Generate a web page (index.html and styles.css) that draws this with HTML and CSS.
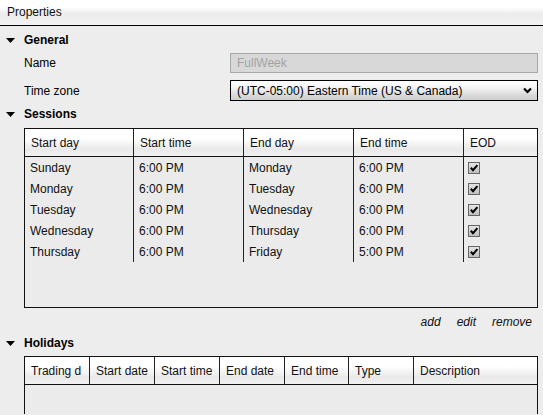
FILE: index.html
```html
<!DOCTYPE html>
<html>
<head>
<meta charset="utf-8">
<link rel="stylesheet" href="styles.css">
</head>
<body>
<svg width="0" height="0" class="defs">
  <defs>
    <linearGradient id="cbg" x1="0" y1="0" x2="0" y2="1">
      <stop offset="0" stop-color="#e8e8e8"/>
      <stop offset="1" stop-color="#bcbcbc"/>
    </linearGradient>
  </defs>
</svg>
<div class="titlebar">Properties</div>
<div class="main">
  <div class="section-head head-general">
    <svg class="tri" width="9" height="5" viewBox="0 0 9 5"><polygon points="0,0 9,0 4.5,5" fill="#000"/></svg>
    <span>General</span>
  </div>
  <div class="field-row row-name">
    <div class="label">Name</div>
    <div class="textbox">FullWeek</div>
  </div>
  <div class="field-row row-tz">
    <div class="label">Time zone</div>
    <div class="select">
      <span>(UTC-05:00) Eastern Time (US &amp; Canada)</span>
      <svg class="chev" width="9" height="7" viewBox="0 0 9 7"><polyline points="1,1.5 4.5,5 8,1.5" fill="none" stroke="#000" stroke-width="2.2"/></svg>
    </div>
  </div>
  <div class="section-head head-sessions">
    <svg class="tri" width="9" height="5" viewBox="0 0 9 5"><polygon points="0,0 9,0 4.5,5" fill="#000"/></svg>
    <span>Sessions</span>
  </div>
  <div class="grid-box sessions">
    <div class="grow ghead">
      <div class="cell">Start day</div>
      <div class="cell">Start time</div>
      <div class="cell">End day</div>
      <div class="cell">End time</div>
      <div class="cell last">EOD</div>
    </div>
    <div class="grow">
      <div class="cell">Sunday</div><div class="cell">6:00 PM</div><div class="cell">Monday</div><div class="cell">6:00 PM</div>
      <div class="cell last"><svg class="chk" width="12" height="12" viewBox="0 0 12 12"><rect x="0.5" y="0.5" width="11" height="11" fill="url(#cbg)" stroke="#666"/><polyline points="2.8,5.8 5,8.2 9.4,3.2" fill="none" stroke="#000" stroke-width="2"/></svg></div>
    </div>
    <div class="grow">
      <div class="cell">Monday</div><div class="cell">6:00 PM</div><div class="cell">Tuesday</div><div class="cell">6:00 PM</div>
      <div class="cell last"><svg class="chk" width="12" height="12" viewBox="0 0 12 12"><rect x="0.5" y="0.5" width="11" height="11" fill="url(#cbg)" stroke="#666"/><polyline points="2.8,5.8 5,8.2 9.4,3.2" fill="none" stroke="#000" stroke-width="2"/></svg></div>
    </div>
    <div class="grow">
      <div class="cell">Tuesday</div><div class="cell">6:00 PM</div><div class="cell">Wednesday</div><div class="cell">6:00 PM</div>
      <div class="cell last"><svg class="chk" width="12" height="12" viewBox="0 0 12 12"><rect x="0.5" y="0.5" width="11" height="11" fill="url(#cbg)" stroke="#666"/><polyline points="2.8,5.8 5,8.2 9.4,3.2" fill="none" stroke="#000" stroke-width="2"/></svg></div>
    </div>
    <div class="grow">
      <div class="cell">Wednesday</div><div class="cell">6:00 PM</div><div class="cell">Thursday</div><div class="cell">6:00 PM</div>
      <div class="cell last"><svg class="chk" width="12" height="12" viewBox="0 0 12 12"><rect x="0.5" y="0.5" width="11" height="11" fill="url(#cbg)" stroke="#666"/><polyline points="2.8,5.8 5,8.2 9.4,3.2" fill="none" stroke="#000" stroke-width="2"/></svg></div>
    </div>
    <div class="grow">
      <div class="cell">Thursday</div><div class="cell">6:00 PM</div><div class="cell">Friday</div><div class="cell">5:00 PM</div>
      <div class="cell last"><svg class="chk" width="12" height="12" viewBox="0 0 12 12"><rect x="0.5" y="0.5" width="11" height="11" fill="url(#cbg)" stroke="#666"/><polyline points="2.8,5.8 5,8.2 9.4,3.2" fill="none" stroke="#000" stroke-width="2"/></svg></div>
    </div>
  </div>
  <div class="actions">
    <span>add</span><span>edit</span><span>remove</span>
  </div>
  <div class="section-head head-holidays">
    <svg class="tri" width="9" height="5" viewBox="0 0 9 5"><polygon points="0,0 9,0 4.5,5" fill="#000"/></svg>
    <span>Holidays</span>
  </div>
  <div class="grid-box holidays">
    <div class="grow ghead">
      <div class="cell">Trading d</div>
      <div class="cell">Start date</div>
      <div class="cell">Start time</div>
      <div class="cell">End date</div>
      <div class="cell">End time</div>
      <div class="cell">Type</div>
      <div class="cell last">Description</div>
    </div>
  </div>
</div>
</body>
</html>
```

FILE: styles.css
```css
html, body {
  margin: 0;
  padding: 0;
}
body {
  width: 543px;
  height: 415px;
  overflow: hidden;
  background: #ededed;
  font-family: "Liberation Sans", Arial, sans-serif;
  font-size: 12px;
  color: #000;
}
.defs {
  display: block;
  width: 0;
  height: 0;
}
.titlebar {
  height: 25px;
  line-height: 24px;
  padding-left: 7px;
  border-bottom: 1px solid #000;
  background: linear-gradient(#ffffff 0%, #ffffff 30%, #ececec 55%, #f2f2f2 100%);
  color: #111;
}
.main {
  padding: 0 5px 0 24px;
}
.section-head {
  height: 20px;
  display: flex;
  align-items: center;
  margin-left: -18px;
  font-weight: bold;
}
.section-head .tri {
  margin-right: 9px;
  flex: none;
}
.head-general { margin-top: 4px; }
.head-sessions { margin-top: 3px; }
.head-holidays { margin-top: 1px; }
.field-row {
  display: flex;
  align-items: center;
}
.row-name { margin-top: 3px; height: 20px; }
.row-tz { margin-top: 7px; height: 21px; }
.label {
  width: 206px;
  flex: none;
}
.textbox {
  flex: 1;
  height: 20px;
  box-sizing: border-box;
  border: 1px solid #a9a9a9;
  background: #d8d8d8;
  color: #a3a3a3;
  padding-left: 6px;
  line-height: 18px;
}
.select {
  flex: 1;
  height: 21px;
  box-sizing: border-box;
  border: 1px solid #000;
  background: linear-gradient(#ffffff 0%, #f4f4f4 35%, #d6d6d6 80%, #cfcfcf 100%);
  display: flex;
  align-items: center;
  justify-content: space-between;
  padding: 0 5px 0 6px;
}
.chev { flex: none; }
.grid-box {
  box-sizing: border-box;
  border: 1px solid #111;
  background: #ebebeb;
  margin-top: 4px;
}
.sessions { height: 180px; }
.holidays {
  height: 58px;
  margin-top: 3px;
  border-bottom: none;
}
.grow {
  display: grid;
  height: 21px;
}
.sessions .grow { grid-template-columns: 109px 110px 110px 110px 1fr; }
.holidays .grow { grid-template-columns: 65px 65px 65px 65px 64px 65px 1fr; }
.grow.ghead {
  height: 28px;
  box-sizing: border-box;
  border-bottom: 1px solid #111;
  background: linear-gradient(#ffffff 0%, #ffffff 35%, #e9e9e9 75%, #f1f1f1 100%);
}
.cell {
  box-sizing: border-box;
  border-right: 1px solid #222;
  padding-left: 5px;
  display: flex;
  align-items: center;
  white-space: nowrap;
  overflow: hidden;
  color: #111;
}
.ghead .cell {
  padding-left: 6px;
}
.cell.last { border-right: none; }
.chk {
  display: block;
  flex: none;
  margin-left: -1px;
}
.actions {
  height: 20px;
  margin-top: 4px;
  display: flex;
  justify-content: flex-end;
  align-items: center;
  gap: 16px;
  padding-right: 6px;
  font-style: italic;
  color: #111;
}
```
